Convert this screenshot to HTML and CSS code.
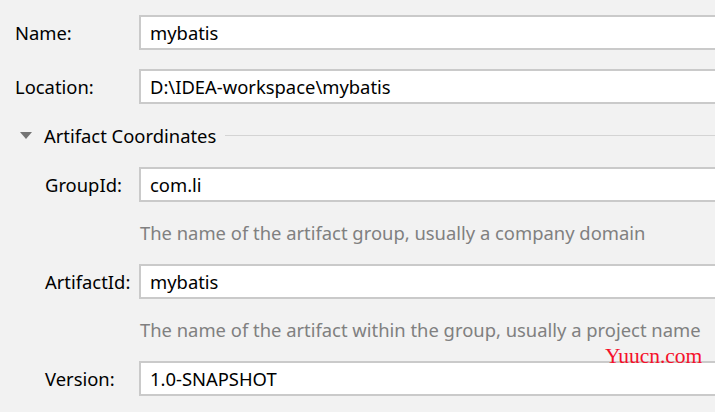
FILE: index.html
```html
<!DOCTYPE html>
<html lang="en">
<head>
    <meta charset="UTF-8">
    <title>New Project</title>
    <link rel="stylesheet" href="styles.css">
</head>
<body>
    <div class="form">
        <div class="row">
            <label class="label">Name:</label>
            <div class="field">mybatis</div>
        </div>
        <div class="row">
            <label class="label">Location:</label>
            <div class="field">D:\IDEA-workspace\mybatis</div>
        </div>

        <div class="section">
            <span class="arrow"></span>
            <span class="section-title">Artifact Coordinates</span>
            <span class="section-line"></span>
        </div>

        <div class="row indent">
            <label class="label">GroupId:</label>
            <div class="field">com.li</div>
        </div>
        <div class="hint">The name of the artifact group, usually a company domain</div>
        <div class="row indent">
            <label class="label">ArtifactId:</label>
            <div class="field">mybatis</div>
        </div>
        <div class="hint">The name of the artifact within the group, usually a project name</div>
        <div class="row indent">
            <label class="label">Version:</label>
            <div class="field">1.0-SNAPSHOT</div>
        </div>
    </div>

    <div class="watermark">Yuucn.com</div>
</body>
</html>
```

FILE: styles.css
```css
body {
    margin: 0;
    height: 412px;
    overflow: hidden;
    background-color: #f2f2f2;
    font-family: "Noto Sans", Arial, sans-serif;
    font-size: 18.4px;
    color: #000;
    position: relative;
}
.form {
    padding-top: 15px;
}
.row {
    display: flex;
    align-items: center;
    height: 35px;
    margin-bottom: 19px;
}
.label {
    width: 124px;
    padding-left: 15px;
}
.indent .label {
    width: 94px;
    padding-left: 45px;
}
.field {
    flex: 1;
    height: 35px;
    box-sizing: border-box;
    border: 2px solid #cacaca;
    border-right: none;
    background-color: #fff;
    padding-left: 9px;
    display: flex;
    align-items: center;
    white-space: nowrap;
}
.section {
    display: flex;
    align-items: center;
    height: 30px;
    margin-top: -3px;
    margin-bottom: 17px;
}
.arrow {
    width: 0;
    height: 0;
    margin-left: 20px;
    margin-right: 12px;
    border-left: 6.5px solid transparent;
    border-right: 6.5px solid transparent;
    border-top: 7px solid #747474;
}
.section-line {
    flex: 1;
    height: 1px;
    margin-left: 9px;
    background-color: #d4d4d4;
}
.hint {
    height: 62px;
    line-height: 62px;
    margin-top: -19px;
    padding-left: 140px;
    color: #808080;
    white-space: nowrap;
    overflow: hidden;
}
.watermark {
    position: absolute;
    left: 605px;
    top: 344px;
    font-family: "Liberation Serif", serif;
    font-size: 21.5px;
    color: #f5102a;
}
```
